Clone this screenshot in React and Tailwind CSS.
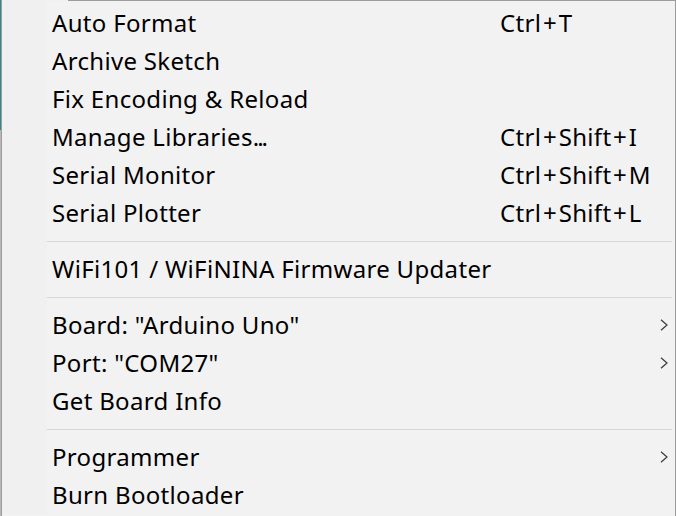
import React from "react";

const Chevron = () => (
  <svg width="8" height="12" viewBox="0 0 8 12" className="block">
    <polyline points="1,0.8 7,6 1,11.2" fill="none" stroke="#3a3a3a" strokeWidth="1.2" />
  </svg>
);

const Shortcut = ({ text }) => {
  const parts = text.split("+");
  return (
    <>
      {parts.map((p, i) => (
        <React.Fragment key={i}>
          {i > 0 ? <span className="mx-[1.7px]">+</span> : null}
          {p}
        </React.Fragment>
      ))}
    </>
  );
};

const Item = ({ label, shortcut, sub }) => (
  <div className="flex h-[38px] items-center">
    <div className="h-full w-[45px] shrink-0 bg-[#f0f0f0]" />
    <div className="w-[453px] shrink-0 pl-[5px] whitespace-nowrap">{label}</div>
    <div className="flex-1 whitespace-nowrap">{shortcut ? <Shortcut text={shortcut} /> : ""}</div>
    {sub ? (
      <div className="mr-[7px] flex w-[8px] items-center">
        <Chevron />
      </div>
    ) : null}
  </div>
);

const Sep = () => (
  <div className="flex h-[18px] items-center">
    <div className="h-full w-[45px] shrink-0 bg-[#f0f0f0]" />
    <div className="mr-[3px] h-px flex-1 bg-[#d7d7d7]" />
  </div>
);

export default function App() {
  return (
    <div
      className="flex h-[516px] w-[676px] overflow-hidden bg-[#f2f2f2] text-[24px] leading-none tracking-[0.32px] text-black"
      style={{ fontFamily: '"Segoe UI", "Noto Sans", sans-serif' }}
    >
      <div className="flex w-px shrink-0 flex-col">
        <div className="h-[130px] bg-[#2f8a90]" />
        <div className="flex-1 bg-[#b8b8b8]" />
      </div>
      <div className="flex flex-1 flex-col border-x border-[#9c9c9c]">
        <div className="flex h-px">
          <div className="w-[66px] bg-[#f0f0f0]" />
          <div className="flex-1 bg-[#9c9c9c]" />
        </div>
        <div className="flex h-[3px]">
          <div className="w-[45px] bg-[#f0f0f0]" />
        </div>
        <Item label="Auto Format" shortcut="Ctrl+T" />
        <Item label="Archive Sketch" />
        <Item label="Fix Encoding & Reload" />
        <Item
          label={
            <>
              Manage Libraries<span className="tracking-[-2px]">...</span>
            </>
          }
          shortcut="Ctrl+Shift+I"
        />
        <Item label="Serial Monitor" shortcut="Ctrl+Shift+M" />
        <Item label="Serial Plotter" shortcut="Ctrl+Shift+L" />
        <Sep />
        <Item label="WiFi101 / WiFiNINA Firmware Updater" />
        <Sep />
        <Item label={'Board: "Arduino Uno"'} sub />
        <Item label={'Port: "COM27"'} sub />
        <Item label="Get Board Info" />
        <Sep />
        <Item label="Programmer" sub />
        <Item label="Burn Bootloader" />
        <div className="flex-1" />
      </div>
    </div>
  );
}
